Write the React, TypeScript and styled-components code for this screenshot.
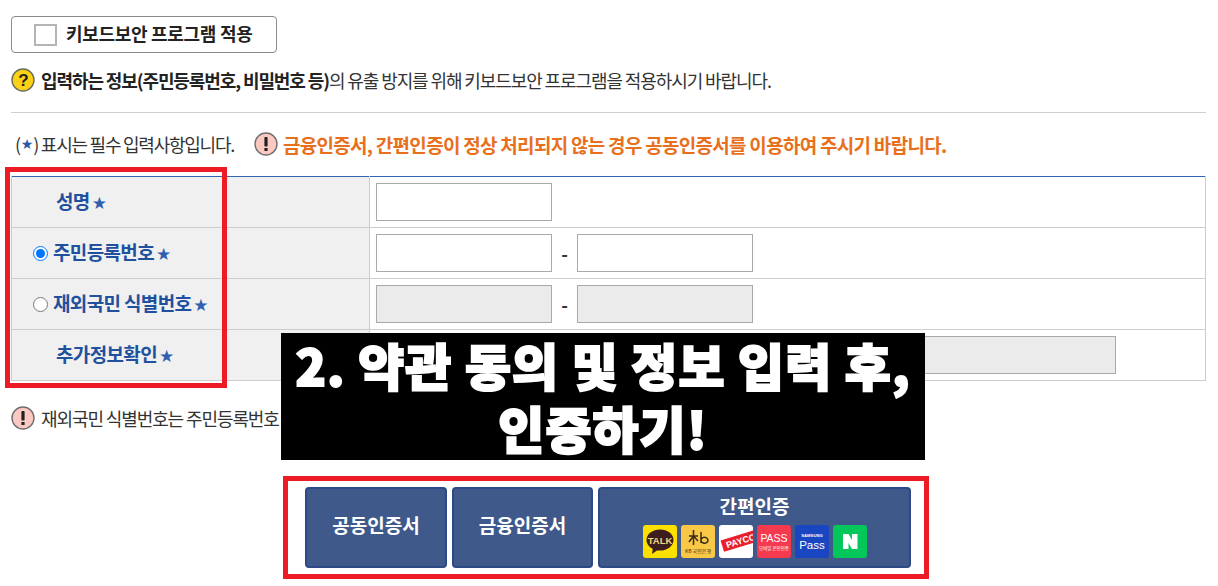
import styled, { createGlobalStyle } from 'styled-components';

const GlobalStyle = createGlobalStyle`
  html, body {
    margin: 0;
    padding: 0;
    background: #fff;
  }
  body {
    font-family: "Noto Sans CJK KR", "Noto Sans", sans-serif;
    color: #333;
  }
`;

const Page = styled.div`
  position: relative;
  width: 1218px;
  height: 586px;
  overflow: hidden;
  box-sizing: border-box;
  padding: 16px 12px 0 11px;
`;

const KeyboardToggle = styled.label`
  display: flex;
  align-items: center;
  gap: 9px;
  box-sizing: border-box;
  width: 266px;
  height: 37px;
  padding-left: 22px;
  border: 1px solid #8a8a8a;
  border-radius: 4px;
  font-size: 18px;
  font-weight: 700;
  letter-spacing: -0.3px;
  color: #222;
`;

const ToggleText = styled.span`
  margin-bottom: 4px;
`;

const CheckBox = styled.span`
  box-sizing: border-box;
  width: 23px;
  height: 22px;
  border: 2px solid #b4b4b4;
  background: #fff;
`;

const Notice = styled.p`
  display: flex;
  align-items: center;
  gap: 6px;
  margin: 0;
  font-size: 18px;
  letter-spacing: -1.1px;
  line-height: 24px;
  white-space: nowrap;
  color: #333;
  strong {
    font-weight: 700;
    color: #222;
  }
`;

const SecurityNotice = styled(Notice)`
  margin-top: 15px;
`;

const Divider = styled.hr`
  height: 1px;
  margin: 20px 0 0;
  border: 0;
  background: #cfcfcf;
`;

const RequiredRow = styled.div`
  display: flex;
  align-items: center;
  height: 24px;
  margin-top: 19px;
  padding-left: 4px;
`;

const RequiredText = styled.span`
  display: flex;
  align-items: center;
  width: 239px;
  font-size: 18px;
  letter-spacing: -1.24px;
  color: #333;
  white-space: nowrap;
  b {
    margin: 0 1px;
    font-family: "DejaVu Sans", sans-serif;
    font-size: 14px;
    font-weight: 700;
    color: #2a5aa8;
  }
`;

const OrangeNotice = styled.strong`
  margin-left: 5px;
  font-size: 19px;
  font-weight: 700;
  letter-spacing: -0.72px;
  color: #e8701c;
  white-space: nowrap;
`;

const FormTable = styled.table`
  box-sizing: border-box;
  width: 1195px;
  margin-top: 20px;
  border-collapse: collapse;
  border-top: 1px solid #2f66b2;
  table-layout: fixed;
`;

const Row = styled.tr`
  height: 51px;
  &:first-child th,
  &:first-child td {
    border-top: 0;
  }
`;

const LabelCell = styled.th<{ $radio?: boolean }>`
  box-sizing: border-box;
  padding: 0 0 0 ${p => (p.$radio ? 21 : 44)}px;
  border: 1px solid #cdcdcd;
  background: #f0f0f0;
  text-align: left;
  font-size: 19px;
  font-weight: 700;
  letter-spacing: -0.65px;
  color: #20509e;
  white-space: nowrap;
`;

const LabelInner = styled.span`
  display: flex;
  align-items: center;
  gap: 5px;
`;

const LabelText = styled.span`
  margin-bottom: 4px;
`;

const Radio = styled.input`
  width: 15px;
  height: 15px;
  margin: 0;
  accent-color: #0075ff;
`;

const Star = styled.span`
  margin-left: -3px;
  margin-top: 2px;
  font-size: 17px;
  color: #2f5fae;
  font-family: "DejaVu Sans", sans-serif;
`;

const FieldCell = styled.td`
  box-sizing: border-box;
  padding: 0 0 0 6px;
  border: 1px solid #cdcdcd;
`;

const FieldRow = styled.div`
  display: flex;
  align-items: center;
`;

const Field = styled.input<{ $wide?: boolean }>`
  box-sizing: border-box;
  width: ${p => (p.$wide ? 740 : 176)}px;
  height: 38px;
  padding: 0 6px;
  border: 1px solid #a9a9a9;
  border-radius: 0;
  background: ${p => (p.disabled ? '#ebebeb' : '#fff')};
  outline: none;
`;

const Dash = styled.span`
  width: 25px;
  text-align: center;
  font-size: 18px;
  font-weight: 700;
  color: #333;
`;

const ForeignerNotice = styled(Notice)`
  margin-top: 25px;
`;

const AuthButtons = styled.div`
  display: flex;
  justify-content: center;
  gap: 5px;
  margin-top: 57px;
  padding-right: 1px;
`;

const AuthButton = styled.button<{ $width: number }>`
  display: flex;
  flex-direction: column;
  align-items: center;
  justify-content: center;
  box-sizing: border-box;
  width: ${p => p.$width}px;
  height: 81px;
  padding: 0 0 5px;
  border: 2px solid #2c4a85;
  border-radius: 4px;
  background: #3f5a8a;
  color: #fff;
  font-family: inherit;
  font-size: 19px;
  font-weight: 700;
  letter-spacing: 0;
  line-height: 26px;
`;

const LogoRow = styled.span`
  display: flex;
  gap: 4px;
  margin-top: 6px;
  font-weight: 400;
`;

const RedFrame = styled.div<{ $x: number; $y: number; $w: number; $h: number }>`
  position: absolute;
  left: ${p => p.$x}px;
  top: ${p => p.$y}px;
  width: ${p => p.$w}px;
  height: ${p => p.$h}px;
  box-sizing: border-box;
  border: 5px solid #ed1c24;
  pointer-events: none;
`;

const Banner = styled.div`
  position: absolute;
  left: 281px;
  top: 333px;
  display: flex;
  flex-direction: column;
  align-items: center;
  gap: 8px;
  box-sizing: border-box;
  width: 644px;
  height: 127px;
  padding-top: 4px;
  background: #000;
  color: #fff;
  font-size: 50px;
  font-weight: 900;
  line-height: 55px;
  letter-spacing: 1.1px;
  white-space: nowrap;
  -webkit-text-stroke: 2px #fff;
`;

const QuestionIcon = () => (
  <svg width="24" height="24" viewBox="0 0 24 24" style={{ flex: 'none' }}>
    <circle cx="12" cy="12" r="11" fill="#fcd116" stroke="#6b6b5a" strokeWidth="1.4" />
    <text x="12" y="18" textAnchor="middle" fontSize="17" fontWeight="900" fontFamily="Liberation Sans" fill="#222">?</text>
  </svg>
);

const AlertIcon = () => (
  <svg width="24" height="24" viewBox="0 0 24 24" style={{ flex: 'none' }}>
    <circle cx="12" cy="12" r="11" fill="#fcc9c2" stroke="#6f6f6f" strokeWidth="1.4" />
    <rect x="10.4" y="5" width="3.2" height="9.5" rx="0.8" fill="#222" />
    <rect x="10.4" y="16" width="3.2" height="3" fill="#222" />
  </svg>
);

const logoFont = 'Liberation Sans, sans-serif';

const KakaoLogo = () => (
  <svg width="34" height="33" viewBox="0 0 34 33">
    <rect width="34" height="33" rx="3" fill="#fee000" />
    <ellipse cx="17" cy="15" rx="13.5" ry="10.5" fill="#3c1e1e" />
    <path d="M10 22 L9 29 L16 24 Z" fill="#3c1e1e" />
    <text x="17" y="19" textAnchor="middle" fontSize="9.5" fontWeight="700" fontFamily={logoFont} fill="#f5d77a">TALK</text>
  </svg>
);

const KbLogo = () => (
  <svg width="34" height="33" viewBox="0 0 34 33">
    <rect width="34" height="33" rx="3" fill="#f9c846" />
    <path d="M8 11 H17 M12.5 5 V20 M12.5 11 L8 17 M12.5 11 L17 16 M20 7 V18 M20 15 a3.5 3 0 1 1 0.1 1" stroke="#3a2d1a" strokeWidth="1.5" fill="none" />
    <text x="17" y="28" textAnchor="middle" fontSize="5" fontFamily="Noto Sans CJK KR" fill="#3a2d1a">KB 국민은행</text>
  </svg>
);

const PaycoLogo = () => (
  <svg width="34" height="33" viewBox="0 0 34 33">
    <rect width="34" height="33" rx="3" fill="#fff" />
    <g transform="rotate(-17 17 18)">
      <rect x="3" y="11" width="40" height="12" fill="#e8202e" />
      <text x="7" y="20.5" fontSize="9" fontWeight="700" fontFamily={logoFont} fill="#fff">PAYCO</text>
    </g>
  </svg>
);

const PassLogo = () => (
  <svg width="34" height="33" viewBox="0 0 34 33">
    <rect width="34" height="33" rx="3" fill="#f5394f" />
    <text x="17" y="17" textAnchor="middle" fontSize="10.5" fontFamily={logoFont} fill="#fff">PASS</text>
    <text x="17" y="25" textAnchor="middle" fontSize="4.5" fontFamily="Noto Sans CJK KR" fill="#fff">모바일 본인인증</text>
  </svg>
);

const SamsungPassLogo = () => (
  <svg width="34" height="33" viewBox="0 0 34 33">
    <rect width="34" height="33" rx="3" fill="#1b46c2" />
    <text x="17" y="12" textAnchor="middle" fontSize="4.2" fontWeight="700" fontFamily={logoFont} fill="#fff">SAMSUNG</text>
    <text x="17" y="24" textAnchor="middle" fontSize="11.5" fontFamily={logoFont} fill="#fff">Pass</text>
  </svg>
);

const NaverLogo = () => (
  <svg width="34" height="33" viewBox="0 0 34 33">
    <rect width="34" height="33" rx="3" fill="#03c75a" />
    <path d="M10 9 H15.5 L19 15 V9 H24.5 V24 H19 L15.5 18 V24 H10 Z" fill="#fff" />
  </svg>
);

const App = () => {
  return (
    <Page>
      <GlobalStyle />
      <KeyboardToggle>
        <CheckBox />
        <ToggleText>키보드보안 프로그램 적용</ToggleText>
      </KeyboardToggle>
      <SecurityNotice>
        <QuestionIcon />
        <span>
          <strong>입력하는 정보(주민등록번호, 비밀번호 등)</strong>의 유출 방지를 위해 키보드보안 프로그램을 적용하시기 바랍니다.
        </span>
      </SecurityNotice>
      <Divider />
      <RequiredRow>
        <RequiredText>
          (<b>★</b>) 표시는 필수 입력사항입니다.
        </RequiredText>
        <AlertIcon />
        <OrangeNotice>금융인증서, 간편인증이 정상 처리되지 않는 경우 공동인증서를 이용하여 주시기 바랍니다.</OrangeNotice>
      </RequiredRow>
      <FormTable>
        <colgroup>
          <col style={{ width: 358 }} />
          <col />
        </colgroup>
        <tbody>
          <Row>
            <LabelCell>
              <LabelInner><LabelText>성명</LabelText><Star>★</Star></LabelInner>
            </LabelCell>
            <FieldCell>
              <FieldRow>
                <Field />
              </FieldRow>
            </FieldCell>
          </Row>
          <Row>
            <LabelCell $radio>
              <LabelInner>
                <Radio type="radio" name="idType" defaultChecked />
                <LabelText>주민등록번호</LabelText><Star>★</Star>
              </LabelInner>
            </LabelCell>
            <FieldCell>
              <FieldRow>
                <Field />
                <Dash>-</Dash>
                <Field />
              </FieldRow>
            </FieldCell>
          </Row>
          <Row>
            <LabelCell $radio>
              <LabelInner>
                <Radio type="radio" name="idType" />
                <LabelText>재외국민 식별번호</LabelText><Star>★</Star>
              </LabelInner>
            </LabelCell>
            <FieldCell>
              <FieldRow>
                <Field disabled />
                <Dash>-</Dash>
                <Field disabled />
              </FieldRow>
            </FieldCell>
          </Row>
          <Row>
            <LabelCell>
              <LabelInner><LabelText>추가정보확인</LabelText><Star>★</Star></LabelInner>
            </LabelCell>
            <FieldCell>
              <FieldRow>
                <Field $wide disabled />
              </FieldRow>
            </FieldCell>
          </Row>
        </tbody>
      </FormTable>
      <ForeignerNotice>
        <AlertIcon />
        <span>재외국민 식별번호는 주민등록번호</span>
      </ForeignerNotice>
      <AuthButtons>
        <AuthButton $width={142}>공동인증서</AuthButton>
        <AuthButton $width={141}>금융인증서</AuthButton>
        <AuthButton $width={313}>
          간편인증
          <LogoRow>
            <KakaoLogo />
            <KbLogo />
            <PaycoLogo />
            <PassLogo />
            <SamsungPassLogo />
            <NaverLogo />
          </LogoRow>
        </AuthButton>
      </AuthButtons>
      <RedFrame $x={5} $y={167} $w={222} $h={221} />
      <RedFrame $x={283} $y={476} $w={646} $h={103} />
      <Banner>
        <span>2. 약관 동의 및 정보 입력 후,</span>
        <span>인증하기!</span>
      </Banner>
    </Page>
  );
};

export default App;
